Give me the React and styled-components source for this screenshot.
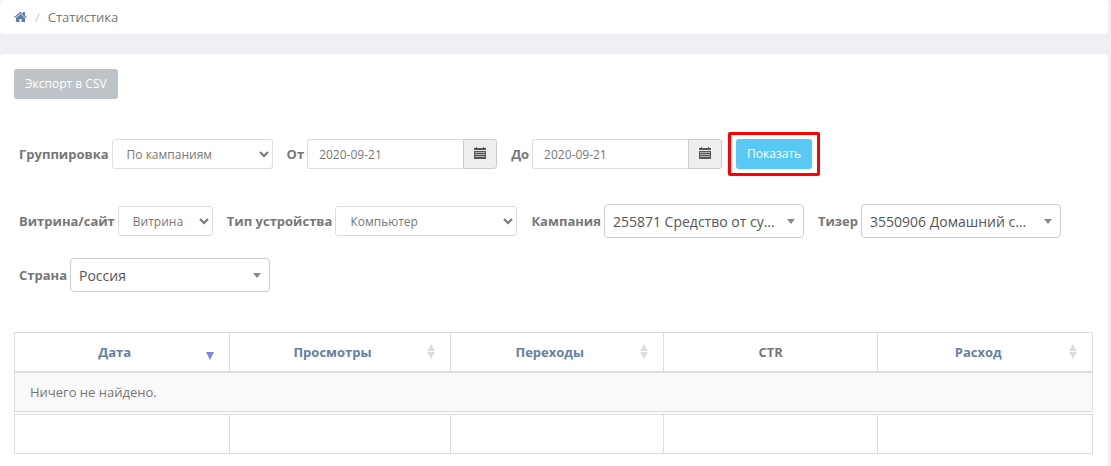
import React, { useState } from "react";
import styled, { createGlobalStyle } from "styled-components";

const GlobalStyle = createGlobalStyle`
  * {
    box-sizing: border-box;
  }

  body {
    margin: 0;
    background-color: #eff0f6;
    color: #777;
    font-family: "Open Sans", "Noto Sans", sans-serif;
    font-size: 13px;
    line-height: 20px;
  }

  button,
  input,
  select {
    font-family: inherit;
  }
`;

const Page = styled.div`
  display: flex;
  flex-direction: column;
  gap: 20px;
  min-height: 100vh;
  padding-right: 3px;
`;

const Breadcrumb = styled.nav`
  display: flex;
  align-items: center;
  gap: 8px;
  padding: 7px 14px;
  border-radius: 4px;
  background-color: white;
`;

const HomeLink = styled.a`
  display: flex;
  color: #5f7fab;
`;

const Slash = styled.span`
  color: #ccc;
`;

const Panel = styled.main`
  flex: 1;
  padding: 15px 15px 12px 14px;
  border-radius: 4px 4px 0 0;
  background-color: white;
`;

const Button = styled.button`
  display: block;
  height: 30px;
  padding: 0 11px;
  border: none;
  border-radius: 3px;
  background-color: ${(props) => (props.$primary ? "#59c8f5" : "#bdc3c7")};
  color: white;
  font-size: 12px;
  line-height: 18px;
  cursor: pointer;
`;

const Filters = styled.form`
  display: flex;
  flex-direction: column;
  margin: 33px 0 40px;
  padding-left: 5px;
`;

const FilterRow = styled.div`
  display: flex;
  flex-wrap: wrap;
  align-items: center;
  gap: 14px;
  margin-bottom: ${(props) => props.$space || 0}px;
`;

const Field = styled.div`
  display: flex;
  align-items: center;
  gap: 3px;
`;

const Label = styled.label`
  font-weight: 700;
`;

const Select = styled.select`
  width: ${(props) => props.$width}px;
  height: 30px;
  padding: 5px 10px;
  border: 1px solid #ddd;
  border-radius: 3px;
  background-color: white;
  color: #777;
  font-size: 12px;
  line-height: 18px;
`;

const SearchSelectBox = styled.div`
  position: relative;
  width: 200px;
`;

const SearchSelectInput = styled.select`
  display: block;
  width: 100%;
  height: 34px;
  padding: 0 24px 0 8px;
  border: 1px solid #ccc;
  border-radius: 4px;
  background-color: white;
  color: #555;
  font-size: 14px;
  appearance: none;
`;

const Caret = styled.span`
  position: absolute;
  top: 15px;
  right: 9px;
  border: 4px solid transparent;
  border-top: 5px solid #888;
  border-bottom: none;
  pointer-events: none;
`;

const InputGroup = styled.div`
  display: flex;
  width: 190px;
`;

const Input = styled.input`
  flex: 1;
  min-width: 0;
  height: 30px;
  padding: 5px 11px;
  border: 1px solid #ddd;
  border-right: none;
  border-radius: 3px 0 0 3px;
  color: #777;
  font-size: 12px;
`;

const Addon = styled.button`
  display: flex;
  align-items: center;
  justify-content: center;
  width: 34px;
  height: 30px;
  padding: 0 0 2px;
  border: 1px solid #ccc;
  border-radius: 0 3px 3px 0;
  background-color: #eee;
  color: #555;
`;

const SubmitGroup = styled.div`
  display: flex;
  align-items: center;
  gap: 6px;
`;

const Highlight = styled.div`
  padding: 4px 5px;
  border: 3px solid #ff0000;
  border-radius: 2px;
`;

const Table = styled.table`
  width: 100%;
  border-collapse: collapse;
  table-layout: fixed;
`;

const Th = styled.th`
  width: ${(props) => props.$width};
  height: 39px;
  padding: 0 15px;
  border: 1px solid #ddd;
  border-bottom: 2px solid #ddd;
  text-align: center;
`;

const SortLink = styled.a`
  display: flex;
  align-items: center;
  gap: 6px;
  color: #67809f;
  text-decoration: none;
`;

const SortText = styled.span`
  flex: 1;
`;

const EmptyCell = styled.td`
  height: 41px;
  padding: 0 15px;
  border: 1px solid #ddd;
  background-color: #f9f9f9;
`;

const FootCell = styled.td`
  height: 41px;
  border: 1px solid #ddd;
  border-top: 4px double #ddd;
`;

const columns = [
  { title: "Дата", width: "19.9%", sort: "desc" },
  { title: "Просмотры", width: "20.5%", sort: "none" },
  { title: "Переходы", width: "19.8%", sort: "none" },
  { title: "CTR", width: "19.9%" },
  { title: "Расход", width: "19.9%", sort: "none" },
];

const HomeIcon = () => (
  <svg width="13" height="14" viewBox="0 0 1664 1792" fill="currentColor">
    <path d="M1408 992v480q0 26-19 45t-45 19h-384v-384h-256v384h-384q-26 0-45-19t-19-45v-480q0-1 .5-3t.5-3l575-474 575 474q1 2 1 6zm223-69l-62 74q-8 9-21 11h-3q-13 0-21-7l-692-577-692 577q-12 8-24 7-13-2-21-11l-62-74q-8-10-7-23.5t11-21.5l719-599q32-26 76-26t76 26l244 204v-195q0-14 9-23t23-9h192q14 0 23 9t9 23v408l219 182q10 8 11 21.5t-7 23.5z" />
  </svg>
);

const CalendarIcon = () => (
  <svg width="12" height="12" viewBox="0 0 12 12" fill="currentColor">
    <path d="M2 0h1v1h6V0h1v1h2v2H0V1h2z" />
    <path d="M0 4h12v7.5a.5.5 0 0 1-.5.5H.5a.5.5 0 0 1-.5-.5z" />
    <path
      d="M1 5.5h10M1 7.5h10M1 9.5h10"
      stroke="#eee"
      strokeWidth="1"
      strokeOpacity="0.6"
    />
  </svg>
);

const SortIcon = ({ sort }) => (
  <svg width="8" height="16" viewBox="0 0 8 16">
    {sort === "desc" ? (
      <path d="M0 8h8L4 16z" fill="#7f86de" />
    ) : (
      <path d="M4 0l4 7H0zM0 8h8l-4 7z" fill="#ddd" />
    )}
  </svg>
);

const SearchSelect = ({ id, label, value }) => (
  <Field>
    <Label htmlFor={id}>{label}</Label>
    <SearchSelectBox>
      <SearchSelectInput id={id}>
        <option>{value}</option>
      </SearchSelectInput>
      <Caret />
    </SearchSelectBox>
  </Field>
);

const PlainSelect = ({ id, label, value, width }) => (
  <Field>
    <Label htmlFor={id}>{label}</Label>
    <Select id={id} $width={width}>
      <option>{value}</option>
    </Select>
  </Field>
);

const DateField = ({ id, label }) => {
  const [date, setDate] = useState("2020-09-21");

  return (
    <Field>
      <Label htmlFor={id}>{label}</Label>
      <InputGroup>
        <Input
          id={id}
          type="text"
          value={date}
          onChange={(e) => setDate(e.target.value)}
        />
        <Addon type="button" aria-label="Календарь">
          <CalendarIcon />
        </Addon>
      </InputGroup>
    </Field>
  );
};

const App = () => {
  return (
    <>
      <GlobalStyle />
      <Page>
        <Breadcrumb>
          <HomeLink href="#" aria-label="Главная">
            <HomeIcon />
          </HomeLink>
          <Slash>/</Slash>
          <span>Статистика</span>
        </Breadcrumb>
        <Panel>
          <Button type="button">Экспорт в CSV</Button>
          <Filters onSubmit={(e) => e.preventDefault()}>
            <FilterRow $space={28}>
              <PlainSelect
                id="group"
                label="Группировка"
                value="По кампаниям"
                width={161}
              />
              <DateField id="from" label="От" />
              <SubmitGroup>
                <DateField id="to" label="До" />
                <Highlight>
                  <Button type="submit" $primary>
                    Показать
                  </Button>
                </Highlight>
              </SubmitGroup>
            </FilterRow>
            <FilterRow $space={20}>
              <PlainSelect
                id="site"
                label="Витрина/сайт"
                value="Витрина"
                width={95}
              />
              <PlainSelect
                id="device"
                label="Тип устройства"
                value="Компьютер"
                width={182}
              />
              <SearchSelect
                id="campaign"
                label="Кампания"
                value="255871 Средство от су..."
              />
              <SearchSelect
                id="teaser"
                label="Тизер"
                value="3550906 Домашний с..."
              />
            </FilterRow>
            <FilterRow>
              <SearchSelect id="country" label="Страна" value="Россия" />
            </FilterRow>
          </Filters>
          <Table>
            <thead>
              <tr>
                {columns.map((column) => (
                  <Th key={column.title} $width={column.width}>
                    {column.sort ? (
                      <SortLink href="#">
                        <SortText>{column.title}</SortText>
                        <SortIcon sort={column.sort} />
                      </SortLink>
                    ) : (
                      column.title
                    )}
                  </Th>
                ))}
              </tr>
            </thead>
            <tbody>
              <tr>
                <EmptyCell colSpan={columns.length}>Ничего не найдено.</EmptyCell>
              </tr>
            </tbody>
            <tfoot>
              <tr>
                {columns.map((column) => (
                  <FootCell key={column.title} />
                ))}
              </tr>
            </tfoot>
          </Table>
        </Panel>
      </Page>
    </>
  );
};

export default App;
